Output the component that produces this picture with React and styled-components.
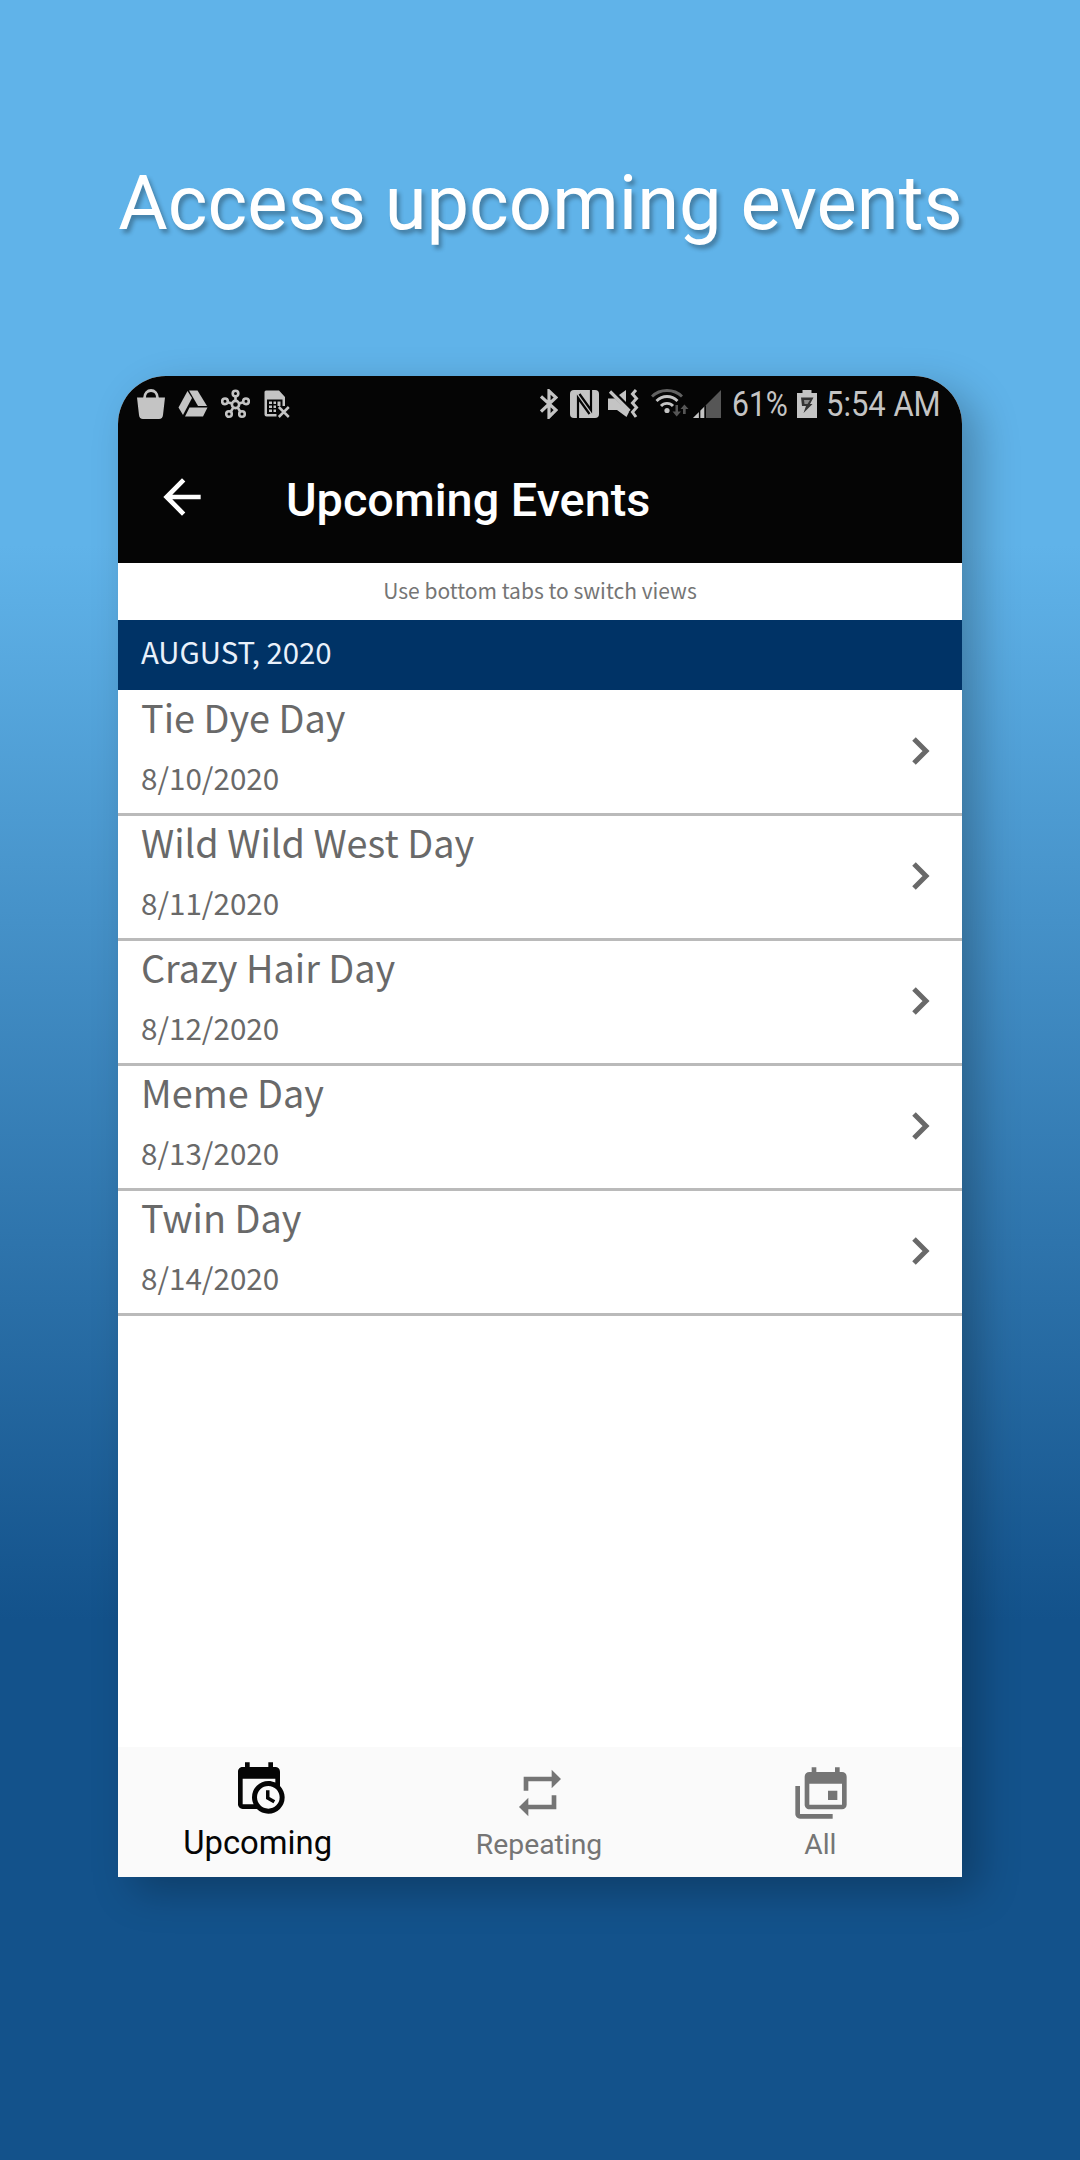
import React from 'react';
import styled, { createGlobalStyle } from 'styled-components';

const GlobalStyle = createGlobalStyle`
    * {
        box-sizing: border-box;
    }
    body {
        margin: 0;
        background: #13528b;
    }
`;

const roboto = 'Roboto, "Liberation Sans", sans-serif';
const source = '"Noto Sans CJK SC", "Noto Sans", sans-serif';

const Page = styled.div`
    width: 1080px;
    height: 2160px;
    display: flex;
    flex-direction: column;
    align-items: center;
    overflow: hidden;
    background: linear-gradient(#60b3e9 0, #60b3e9 545px, #13528b 1620px);
`;
const Headline = styled.h1`
    margin: 0;
    padding: 159px 0 0 1px;
    height: 376px;
    font: 400 75.9px/90px ${roboto};
    white-space: nowrap;
    color: #fff;
    text-shadow: 3px 4px 4px rgba(0, 0, 0, 0.3);
`;
const Phone = styled.main`
    width: 844px;
    height: 1501px;
    flex: none;
    display: flex;
    flex-direction: column;
    overflow: hidden;
    border-radius: 48px 48px 0 0;
    background: #fff;
    box-shadow: 16px 14px 40px rgba(0, 0, 0, 0.25);
`;
const StatusBar = styled.div`
    height: 54px;
    flex: none;
    display: flex;
    align-items: center;
    padding: 1px 24px 0 19px;
    background: #050505;
`;
const StatusIcon = styled.svg`
    width: ${props => props.$w}px;
    height: 30px;
    flex: none;
    margin-left: ${props => props.$gap || 0}px;
    fill: #c4c4c4;
    stroke: none;
`;
const Spacer = styled.div`
    flex: 1;
`;
/* the status bar clock is set narrower than regular Roboto */
const StatusText = styled.span`
    width: ${props => props.$w}px;
    margin-left: ${props => props.$gap}px;
    padding-top: 2px;
    font: 400 35px/53px ${roboto};
    color: #c4c4c4;
    white-space: nowrap;
    transform: scaleX(${props => props.$squash});
    transform-origin: left;
`;
const AppBar = styled.header`
    height: 133px;
    flex: none;
    display: flex;
    align-items: center;
    padding: 0 0 0 36px;
    background: #050505;
`;
const BackIcon = styled.svg`
    width: 56px;
    height: 56px;
    fill: #fff;
`;
const AppTitle = styled.h2`
    margin: 6px 0 0 76px;
    font: 500 46.8px/60px ${roboto};
    color: #fff;
`;
const Hint = styled.p`
    height: 57px;
    flex: none;
    margin: 0;
    font: 400 21px/54px ${source};
    text-align: center;
    color: #757575;
`;
const MonthHeader = styled.div`
    height: 70px;
    flex: none;
    padding-left: 23px;
    font: 400 29.4px/62px ${source};
    color: #e9f1fb;
    background: #003366;
`;
const EventList = styled.ul`
    flex: 1;
    margin: 0;
    padding: 1px 0 0;
    list-style: none;
`;
const EventRow = styled.li`
    height: 125px;
    display: flex;
    align-items: center;
    justify-content: space-between;
    padding: 0 24px 0 23px;
    border-bottom: 3px solid #bababa;
`;
const EventText = styled.div`
    height: 100%;
    display: flex;
    flex-direction: column;
    color: #696969;
`;
const EventName = styled.span`
    font: 400 37.8px/51px ${source};
`;
const EventDate = styled.span`
    margin-top: 9px;
    font: 400 29.6px/54px ${source};
`;
const Chevron = styled.svg`
    width: 28px;
    height: 36px;
    margin-bottom: 2px;
    fill: none;
    stroke: #696969;
    stroke-width: 5;
`;
const TabBar = styled.nav`
    height: 130px;
    flex: none;
    display: flex;
    background: #fafafa;
`;
const Tab = styled.div`
    flex: 1;
    display: flex;
    flex-direction: column;
    align-items: center;
    padding-top: ${props => props.$active ? 13 : 18}px;
    font: 400 ${props => props.$active ? 32.8 : 28.3}px/40px ${roboto};
    color: ${props => props.$active ? '#050505' : '#757575'};

    svg {
        width: 56px;
        height: 56px;
        fill: currentColor;
    }
`;
const TabLabel = styled.span`
    margin-top: ${props => props.$active ? 7 : 4}px;
    padding-right: 2px;
`;

const EVENTS = [
    { name: 'Tie Dye Day', date: '8/10/2020' },
    { name: 'Wild Wild West Day', date: '8/11/2020' },
    { name: 'Crazy Hair Day', date: '8/12/2020' },
    { name: 'Meme Day', date: '8/13/2020' },
    { name: 'Twin Day', date: '8/14/2020' },
];

const TABS = [
    {
        label: 'Upcoming',
        active: true,
        path: 'M15,13H16.5V15.82L18.94,17.23L18.19,18.53L15,16.69V13M19,8H5V19H9.67C9.24,18.09 9,17.07 9,16A7,7 0 0,1 16,9C17.07,9 18.09,9.24 19,9.67V8M5,21C3.89,21 3,20.1 3,19V5C3,3.89 3.89,3 5,3H6V1H8V3H16V1H18V3H19A2,2 0 0,1 21,5V11.1C22.24,12.36 23,14.09 23,16A7,7 0 0,1 16,23C14.09,23 12.36,22.24 11.1,21H5M16,11.15A4.85,4.85 0 0,0 11.15,16C11.15,18.68 13.32,20.85 16,20.85A4.85,4.85 0 0,0 20.85,16C20.85,13.32 18.68,11.15 16,11.15Z',
    },
    {
        label: 'Repeating',
        path: 'M17,17H7V14L3,18L7,22V19H19V13H17M7,7H17V10L21,6L17,2V5H5V11H7V7Z',
    },
    {
        label: 'All',
        path: 'M21,17V8H7V17H21M21,3A2,2 0 0,1 23,5V17A2,2 0 0,1 21,19H7C5.89,19 5,18.1 5,17V5A2,2 0 0,1 7,3H8V1H10V3H18V1H20V3H21M3,21H17V23H3C1.89,23 1,22.1 1,21V9H3V21M19,15H15V11H19V15Z',
    },
];

const NotificationIcons = () => (
    <>
        <StatusIcon $w={28} viewBox="0 0 28 30">
            <path d="M0 8.500H28L26 26Q25.600 30 22 30H6Q2.400 30 2 26Z" />
            <path d="M7.500 9C7.500 -1 20.500 -1 20.500 9" fill="none" stroke="#c4c4c4" strokeWidth="2.800" />
        </StatusIcon>
        <StatusIcon $w={30} $gap={13} viewBox="0 0 30 30">
            <path d="M9.500 2L14 9L5 26L0.500 18.500Z" />
            <path d="M11 1.500H19.500L29 17H20Z" />
            <path d="M11.500 18.500H29.500L25 27.500H7Z" />
        </StatusIcon>
        <StatusIcon $w={29} $gap={13} viewBox="0 0 29 30">
            <g fill="none" stroke="#c4c4c4" strokeWidth="2.600">
                <circle cx="14.500" cy="15.500" r="3.600" />
                <circle cx="14.500" cy="4.600" r="2.800" />
                <circle cx="4" cy="12.300" r="2.800" />
                <circle cx="25" cy="12.300" r="2.800" />
                <circle cx="8" cy="25" r="2.800" />
                <circle cx="21" cy="25" r="2.800" />
                <path d="M14.500 7.500V12M6.700 13.200L11 14.500M22.300 13.200L18 14.500M9.700 22.700L12.400 18.400M19.300 22.700L16.600 18.400" />
            </g>
        </StatusIcon>
        <StatusIcon $w={26} $gap={14} viewBox="0 0 26 30">
            <path d="M2 1.500H15L21 8V17H18.500V10H3V25H12.500V27.500H2.500Q0.500 27.500 0.500 25.500V3Q0.500 1.500 2 1.500Z" />
            <path d="M2 8H20V10.500H2Z" />
            <path d="M5 12.500H8V15H5ZM9.500 12.500H12V15H9.500ZM13.500 12.500H16.500V17H13.500ZM5 16.500H8V19H5ZM9.500 16.500H12V19H9.500ZM5 20.500H8V23H5ZM9.500 20.500H12V23H9.500Z" />
            <path d="M14.800 18L24.800 28M24.800 18L14.800 28" stroke="#c4c4c4" strokeWidth="2.500" />
        </StatusIcon>
    </>
);

const SystemIcons = () => (
    <>
        <StatusIcon $w={18} viewBox="0 0 18 30">
            <path
                d="M1 7.500L16 21L9 28V2L16 8.500L1 22.500"
                fill="none"
                stroke="#c4c4c4"
                strokeWidth="3.200"
            />
        </StatusIcon>
        <StatusIcon $w={29} $gap={12} viewBox="0 0 29 30">
            <rect y="1" width="29" height="28" rx="4" />
            <path d="M8 29V9L19.500 25M21 1V21L9.500 5" fill="none" stroke="#050505" strokeWidth="2.200" />
        </StatusIcon>
        <StatusIcon $w={31} $gap={9} viewBox="0 0 31 30">
            <path d="M0 9.500H7L21 23L18.500 28L9 21H0Z" />
            <path d="M11 6L18 1V13Z" />
            <path d="M2 2.500L21.500 22" fill="none" stroke="#c4c4c4" strokeWidth="3.200" />
            <path d="M28 1L24.500 5L28.500 9.500L24.500 14L28.500 18.500L24.500 23L28 28" fill="none" stroke="#c4c4c4" strokeWidth="3" />
        </StatusIcon>
        <StatusIcon $w={38} $gap={12} viewBox="0 0 38 30">
            <g fill="none" strokeWidth="2.800">
                <path d="M1 7.500C9 -0.500 23 -0.500 31 7.500" stroke="#626262" />
                <path d="M5.500 12C11.500 6 20.500 6 26.500 12" stroke="#c4c4c4" />
                <path d="M10 17C13 13.500 19 13.500 22 17" stroke="#c4c4c4" />
            </g>
            <circle cx="16" cy="21.500" r="2.600" />
            <path d="M24.500 16H27V22.500H30L25.700 27.500L21.500 22.500H24.500ZM32 25H34.700V20H37.500L33.400 15.500L29.500 20H32Z" fill="#565656" />
        </StatusIcon>
        <StatusIcon $w={28} $gap={4} viewBox="0 0 28 30">
            <path d="M28 1V29H0Z" fill="#565656" />
            <path d="M5.800 23.200V29H0ZM7.300 21.700L11.300 17.700V29H7.300Z" />
            <path d="M6 22V29H7.200V21ZM11.500 17.500V29H13V16Z" fill="#050505" />
        </StatusIcon>
        <StatusText $w={56} $gap={11} $squash={0.86}>61%</StatusText>
        <StatusIcon $w={20} $gap={9} viewBox="0 0 20 30">
            <path d="M5.500 1H14.500V4H20V29H0V4H5.500Z" />
            <path d="M4 8.500H16.500L13 15H15.500L6.500 24L9 17H5Z" fill="#333" />
            <path d="M7 11H13L10.500 15H7.500Z" fill="#8a8a8a" />
        </StatusIcon>
        <StatusText $w={112} $gap={9} $squash={0.885}>5:54 AM</StatusText>
    </>
);

export default function App() {
    return (
        <>
            <GlobalStyle />
            <Page>
                <Headline>Access upcoming events</Headline>
                <Phone>
                    <StatusBar>
                        <NotificationIcons />
                        <Spacer />
                        <SystemIcons />
                    </StatusBar>
                    <AppBar>
                        <BackIcon viewBox="0 0 24 24">
                            <path d="M20 11H7.830l5.590-5.590L12 4l-8 8 8 8 1.410-1.410L7.830 13H20v-2z" />
                        </BackIcon>
                        <AppTitle>Upcoming Events</AppTitle>
                    </AppBar>
                    <Hint>Use bottom tabs to switch views</Hint>
                    <MonthHeader>AUGUST, 2020</MonthHeader>
                    <EventList>
                        {EVENTS.map(event => (
                            <EventRow key={event.date}>
                                <EventText>
                                    <EventName>{event.name}</EventName>
                                    <EventDate>{event.date}</EventDate>
                                </EventText>
                                <Chevron viewBox="0 0 28 36">
                                    <path d="M4 6L16 18L4 30" />
                                </Chevron>
                            </EventRow>
                        ))}
                    </EventList>
                    <TabBar>
                        {TABS.map(tab => (
                            <Tab key={tab.label} $active={tab.active}>
                                <svg viewBox="0 0 24 24">
                                    <path d={tab.path} />
                                </svg>
                                <TabLabel $active={tab.active}>{tab.label}</TabLabel>
                            </Tab>
                        ))}
                    </TabBar>
                </Phone>
            </Page>
        </>
    );
}
